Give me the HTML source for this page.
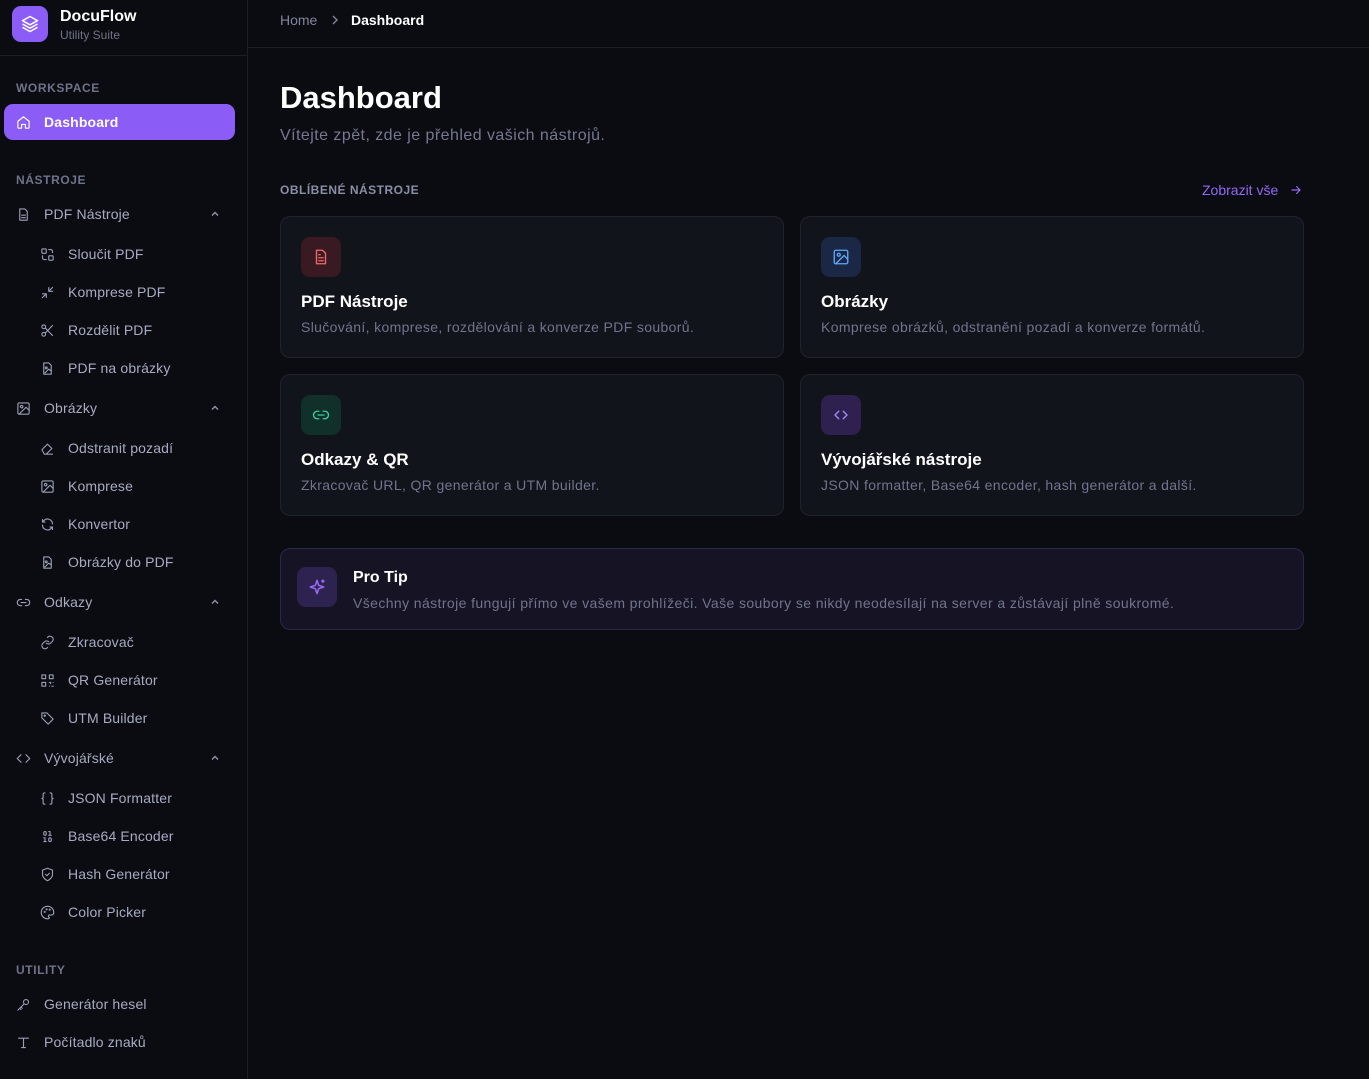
<!DOCTYPE html>
<html><head><meta charset="utf-8"><style>
*{box-sizing:border-box;margin:0;padding:0}
body{width:1369px;height:1079px;background:#0b0c11;font-family:"Liberation Sans","Noto Sans CJK SC",sans-serif;color:#e8e9f0;position:relative;overflow:hidden}
.sb{position:absolute;left:0;top:0;width:248px;height:1079px;background:#0b0c11;border-right:1px solid #1c1e27}
.abs{position:absolute}
.logo{left:12px;top:6px;width:36px;height:36px;border-radius:9px;background:#8b5cf6;display:flex;align-items:center;justify-content:center}
.lbl{font-size:12px;font-weight:bold;color:#6f7389;letter-spacing:.6px;left:16px}
.it{left:16px;font-size:14px;color:#a7abc2;display:flex;align-items:center;height:20px;transform:translateY(-10px);letter-spacing:.15px}
.it svg{width:15px;height:15px;margin-right:13px;stroke:#9a9fb6;fill:none;stroke-width:1.8;stroke-linecap:round;stroke-linejoin:round}
.sub{left:40px}
.sub svg{margin-right:13px}
.chev{position:absolute;left:210px;width:10px;height:10px;transform:translateY(-5px)}
.card{position:absolute;width:504px;height:142px;background:#12141b;border:1px solid #20232d;border-radius:10px}
.ic{position:absolute;left:20px;top:20px;width:40px;height:40px;border-radius:9px;display:flex;align-items:center;justify-content:center}
.ic svg{width:18px;height:18px;fill:none;stroke-width:1.8;stroke-linecap:round;stroke-linejoin:round}
.ct{position:absolute;left:20px;top:75px;font-size:17px;font-weight:bold;color:#fff}
.cd{position:absolute;left:20px;top:102px;font-size:14px;color:#70748c;letter-spacing:.35px}
</style></head><body>
<div class="sb">
 <div class="abs logo"><svg width="20" height="20" viewBox="0 0 24 24" fill="none" stroke="#fff" stroke-width="1.8" stroke-linejoin="round"><path d="M12 3 3 8l9 5 9-5z"/><path d="M3 12l9 5 9-5"/><path d="M3 16l9 5 9-5"/></svg></div>
 <div class="abs" style="left:60px;top:8px;font-size:16px;font-weight:bold;color:#fff">DocuFlow</div>
 <div class="abs" style="left:60px;top:28px;font-size:12px;color:#6f7389">Utility Suite</div>
 <div class="abs" style="left:0;top:55px;width:247px;border-top:1px solid #1c1e27"></div>
 <div class="abs lbl" style="top:81px">WORKSPACE</div>
 <div class="abs" style="left:4px;top:104px;width:231px;height:36px;border-radius:9px;background:#8b5cf6"></div>
 <div class="abs it" style="top:122px;color:#fff;font-weight:bold"><svg style="stroke:#fff" viewBox="0 0 24 24"><path d="M3 10l9-7 9 7v10a1 1 0 0 1-1 1h-5v-6h-6v6H4a1 1 0 0 1-1-1z"/></svg>Dashboard</div>
 <div class="abs lbl" style="top:173px">NÁSTROJE</div>

 <div class="abs it" style="top:214px"><svg viewBox="0 0 24 24"><path d="M14 3H6v18h12V7z"/><path d="M9 13h6M9 17h6"/></svg>PDF Nástroje</div>
 <svg class="chev" style="top:214px" viewBox="0 0 10 10" fill="none" stroke="#8a8ea6" stroke-width="1.5"><path d="M2 6.5 5 3.5 8 6.5"/></svg>
 <div class="abs it sub" style="top:254px"><svg viewBox="0 0 24 24"><rect x="3" y="3" width="7" height="7" rx="1"/><rect x="14" y="14" width="7" height="7" rx="1"/><path d="M14 4h3a3 3 0 0 1 3 3v2M4 14v3a3 3 0 0 0 3 3h3"/></svg>Sloučit PDF</div>
 <div class="abs it sub" style="top:292px"><svg viewBox="0 0 24 24"><path d="M4 20l6-6M4 14h6v6M20 4l-6 6M14 4v6h6"/></svg>Komprese PDF</div>
 <div class="abs it sub" style="top:330px"><svg viewBox="0 0 24 24"><circle cx="6" cy="6" r="3"/><circle cx="6" cy="18" r="3"/><path d="M8.5 8 20 20M8.5 16 20 4"/></svg>Rozdělit PDF</div>
 <div class="abs it sub" style="top:368px"><svg viewBox="0 0 24 24"><path d="M14 3H6v18h12V7z"/><circle cx="10" cy="11" r="1.5"/><path d="M18 16l-4-3-6 6"/></svg>PDF na obrázky</div>

 <div class="abs it" style="top:408px"><svg viewBox="0 0 24 24"><rect x="3" y="3" width="18" height="18" rx="2"/><circle cx="9" cy="9" r="2"/><path d="M21 15l-5-5L5 21"/></svg>Obrázky</div>
 <svg class="chev" style="top:408px" viewBox="0 0 10 10" fill="none" stroke="#8a8ea6" stroke-width="1.5"><path d="M2 6.5 5 3.5 8 6.5"/></svg>
 <div class="abs it sub" style="top:448px"><svg viewBox="0 0 24 24"><path d="M7 21h13M3 14l9-9 7 7-9 9H7z"/></svg>Odstranit pozadí</div>
 <div class="abs it sub" style="top:486px"><svg viewBox="0 0 24 24"><rect x="3" y="3" width="18" height="18" rx="2"/><circle cx="9" cy="9" r="2"/><path d="M21 15l-5-5L5 21"/></svg>Komprese</div>
 <div class="abs it sub" style="top:524px"><svg viewBox="0 0 24 24"><path d="M20 11a8 8 0 0 0-14-5l-2 2M4 13a8 8 0 0 0 14 5l2-2M4 4v4h4M20 20v-4h-4"/></svg>Konvertor</div>
 <div class="abs it sub" style="top:562px"><svg viewBox="0 0 24 24"><path d="M14 3H6v18h12V7z"/><circle cx="10" cy="11" r="1.5"/><path d="M18 16l-4-3-6 6"/></svg>Obrázky do PDF</div>

 <div class="abs it" style="top:602px"><svg viewBox="0 0 24 24"><path d="M9 17H7a5 5 0 0 1 0-10h2M15 7h2a5 5 0 0 1 0 10h-2M8 12h8"/></svg>Odkazy</div>
 <svg class="chev" style="top:602px" viewBox="0 0 10 10" fill="none" stroke="#8a8ea6" stroke-width="1.5"><path d="M2 6.5 5 3.5 8 6.5"/></svg>
 <div class="abs it sub" style="top:642px"><svg viewBox="0 0 24 24"><path d="M10 13a5 5 0 0 0 7 0l3-3a5 5 0 0 0-7-7l-1 1M14 11a5 5 0 0 0-7 0l-3 3a5 5 0 0 0 7 7l1-1"/></svg>Zkracovač</div>
 <div class="abs it sub" style="top:680px"><svg viewBox="0 0 24 24"><rect x="3" y="3" width="6" height="6"/><rect x="15" y="3" width="6" height="6"/><rect x="3" y="15" width="6" height="6"/><path d="M15 15h2v2M21 21h-2M15 21h.01M21 15v.01"/></svg>QR Generátor</div>
 <div class="abs it sub" style="top:718px"><svg viewBox="0 0 24 24"><path d="M3 3h8l10 10-8 8L3 11z"/><circle cx="7.5" cy="7.5" r="1"/></svg>UTM Builder</div>

 <div class="abs it" style="top:758px"><svg viewBox="0 0 24 24"><path d="M8 6l-6 6 6 6M16 6l6 6-6 6"/></svg>Vývojářské</div>
 <svg class="chev" style="top:758px" viewBox="0 0 10 10" fill="none" stroke="#8a8ea6" stroke-width="1.5"><path d="M2 6.5 5 3.5 8 6.5"/></svg>
 <div class="abs it sub" style="top:798px"><svg viewBox="0 0 24 24"><path d="M8 3H7a2 2 0 0 0-2 2v5a2 2 0 0 1-2 2 2 2 0 0 1 2 2v5a2 2 0 0 0 2 2h1M16 3h1a2 2 0 0 1 2 2v5a2 2 0 0 0 2 2 2 2 0 0 0-2 2v5a2 2 0 0 1-2 2h-1"/></svg>JSON Formatter</div>
 <div class="abs it sub" style="top:836px"><svg viewBox="0 0 24 24"><rect x="14" y="14" width="4" height="6" rx="2"/><rect x="6" y="4" width="4" height="6" rx="2"/><path d="M6 20h4M14 10h4M6 14h2v6M14 4h2v6"/></svg>Base64 Encoder</div>
 <div class="abs it sub" style="top:874px"><svg viewBox="0 0 24 24"><path d="M12 22s8-4 8-10V5l-8-3-8 3v7c0 6 8 10 8 10z"/><path d="M9 12l2 2 4-4"/></svg>Hash Generátor</div>
 <div class="abs it sub" style="top:912px"><svg viewBox="0 0 24 24"><path d="M12 22a10 10 0 1 1 10-10c0 3-2 4-4 4h-2a2 2 0 0 0-1 4c0 1-1 2-3 2z"/><circle cx="7.5" cy="11" r=".8"/><circle cx="10.5" cy="7" r=".8"/><circle cx="15.5" cy="7.5" r=".8"/></svg>Color Picker</div>

 <div class="abs lbl" style="top:963px">UTILITY</div>
 <div class="abs it" style="top:1004px"><svg viewBox="0 0 24 24"><circle cx="16" cy="8" r="4"/><path d="M13 11 3 21M6 18l2 2M8 16l2 2"/></svg>Generátor hesel</div>
 <div class="abs it" style="top:1042px"><svg viewBox="0 0 24 24"><path d="M4 5h16M12 5v15M9 20h6"/></svg>Počítadlo znaků</div>
</div>

<div class="abs" style="left:248px;top:47px;width:1121px;border-top:1px solid #1c1e27"></div>
<div class="abs" style="left:280px;top:12px;font-size:14px;color:#80849a">Home</div>
<svg class="abs" style="left:330px;top:14px" width="10" height="12" viewBox="0 0 10 12" fill="none" stroke="#80849a" stroke-width="1.4"><path d="M3 2l4 4-4 4"/></svg>
<div class="abs" style="left:351px;top:12px;font-size:14px;color:#fff;font-weight:bold">Dashboard</div>

<div class="abs" style="left:280px;top:80px;font-size:31px;font-weight:bold;color:#fff">Dashboard</div>
<div class="abs" style="left:280px;top:127px;font-size:16px;color:#747891;letter-spacing:.45px">Vítejte zpět, zde je přehled vašich nástrojů.</div>
<div class="abs" style="left:280px;top:183px;font-size:12px;font-weight:bold;color:#8a8ea6;letter-spacing:.5px">OBLÍBENÉ NÁSTROJE</div>
<div class="abs" style="left:1202px;top:182px;font-size:14px;color:#9467f5">Zobrazit vše</div>
<svg class="abs" style="left:1289px;top:183px" width="14" height="14" viewBox="0 0 24 24" fill="none" stroke="#9467f5" stroke-width="2" stroke-linecap="round"><path d="M5 12h14M13 6l6 6-6 6"/></svg>

<div class="card" style="left:280px;top:216px"><div class="ic" style="background:#3a1a22"><svg viewBox="0 0 24 24" stroke="#f06a6a"><path d="M14 3H6v18h12V7z"/><path d="M9 9h2M9 13h6M9 17h6"/></svg></div><div class="ct">PDF Nástroje</div><div class="cd">Slučování, komprese, rozdělování a konverze PDF souborů.</div></div>
<div class="card" style="left:800px;top:216px"><div class="ic" style="background:#1a2845"><svg viewBox="0 0 24 24" stroke="#60a5fa"><rect x="3" y="3" width="18" height="18" rx="2"/><circle cx="9" cy="9" r="2"/><path d="M21 15l-5-5L5 21"/></svg></div><div class="ct">Obrázky</div><div class="cd">Komprese obrázků, odstranění pozadí a konverze formátů.</div></div>
<div class="card" style="left:280px;top:374px"><div class="ic" style="background:#12302a"><svg viewBox="0 0 24 24" stroke="#34d399"><path d="M9 17H7a5 5 0 0 1 0-10h2M15 7h2a5 5 0 0 1 0 10h-2M8 12h8"/></svg></div><div class="ct">Odkazy &amp; QR</div><div class="cd">Zkracovač URL, QR generátor a UTM builder.</div></div>
<div class="card" style="left:800px;top:374px"><div class="ic" style="background:#2e2150"><svg viewBox="0 0 24 24" stroke="#a78bfa"><path d="M9 7l-5 5 5 5M15 7l5 5-5 5"/></svg></div><div class="ct">Vývojářské nástroje</div><div class="cd">JSON formatter, Base64 encoder, hash generátor a další.</div></div>

<div class="abs" style="left:280px;top:548px;width:1024px;height:82px;background:#161324;border:1px solid #2c2648;border-radius:10px">
 <div class="abs" style="left:16px;top:18px;width:40px;height:40px;border-radius:9px;background:#2e2350;display:flex;align-items:center;justify-content:center"><svg width="20" height="20" viewBox="0 0 24 24" fill="none" stroke="#9b6cf7" stroke-width="1.8" stroke-linejoin="round"><path d="M12 4l2 6 6 2-6 2-2 6-2-6-6-2 6-2z"/><path d="M19 3v4M17 5h4"/></svg></div>
 <div class="abs" style="left:72px;top:20px;font-size:16px;font-weight:bold;color:#fff">Pro Tip</div>
 <div class="abs" style="left:72px;top:46px;font-size:14px;color:#70748c;letter-spacing:.4px">Všechny nástroje fungují přímo ve vašem prohlížeči. Vaše soubory se nikdy neodesílají na server a zůstávají plně soukromé.</div>
</div>
</body></html>
